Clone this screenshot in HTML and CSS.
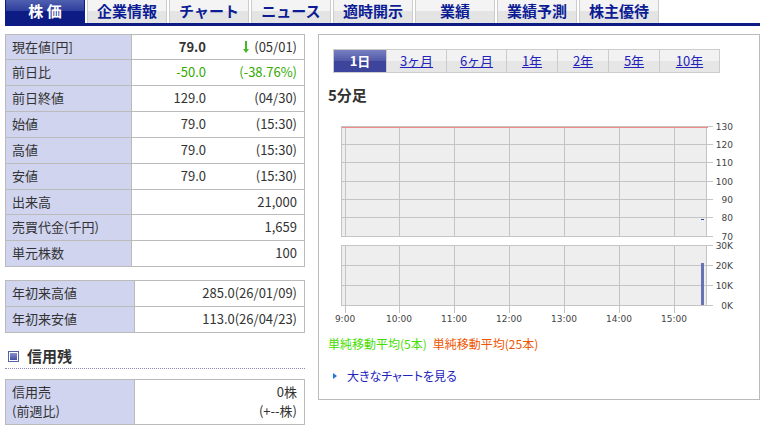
FILE: index.html
```html
<!DOCTYPE html>
<html lang="ja">
<head>
  <meta charset="UTF-8" />
  <meta name="viewport" content="width=device-width, initial-scale=1" />
  <title>株価</title>
  <link rel="stylesheet" href="styles.css">
</head>

<body>
  <!-- メインタブ -->
  <nav class="main-nav">
    <a href="#" class="active">株 価</a>
    <a href="#">企業情報</a>
    <a href="#">チャート</a>
    <a href="#">ニュース</a>
    <a href="#">適時開示</a>
    <a href="#">業績</a>
    <a href="#">業績予測</a>
    <a href="#">株主優待</a>
  </nav>

  <div class="contents">
    <!-- 株価情報 -->
    <div class="info">
      <table class="data price">
        <tr class="short"><th>現在値[円]</th><td><b>79.0</b></td><td class="time"><svg class="down" width="8" height="12" viewBox="0 0 8 12"><path d="M3 0h2v8h2L4 12 1 8h2z" /></svg>(05/01)</td></tr>
        <tr class="minus"><th>前日比</th><td>-50.0</td><td class="time">(-38.76%)</td></tr>
        <tr><th>前日終値</th><td>129.0</td><td class="time">(04/30)</td></tr>
        <tr><th>始値</th><td>79.0</td><td class="time">(15:30)</td></tr>
        <tr><th>高値</th><td>79.0</td><td class="time">(15:30)</td></tr>
        <tr><th>安値</th><td>79.0</td><td class="time">(15:30)</td></tr>
        <tr class="short"><th>出来高</th><td colspan="2">21,000</td></tr>
        <tr><th>売買代金(千円)</th><td colspan="2">1,659</td></tr>
        <tr><th>単元株数</th><td colspan="2">100</td></tr>
      </table>

      <table class="data year">
        <tr><th>年初来高値</th><td>285.0(26/01/09)</td></tr>
        <tr><th>年初来安値</th><td>113.0(26/04/23)</td></tr>
      </table>

      <h2><span class="mark"></span>信用残</h2>

      <table class="data margin-trade">
        <tr><th>信用売<br>(前週比)</th><td>0株<br>(+--株)</td></tr>
      </table>
    </div>

    <!-- チャート -->
    <div class="chart-box">
      <div class="term">
        <a href="#" class="active">1日</a>
        <a href="#" class="month">3ヶ月</a>
        <a href="#" class="month">6ヶ月</a>
        <a href="#">1年</a>
        <a href="#">2年</a>
        <a href="#">5年</a>
        <a href="#" class="month">10年</a>
      </div>

      <h3>5分足</h3>

      <svg class="chart" width="412" height="212" viewBox="0 0 412 212">
        <rect class="plot" x="13" y="10" width="366" height="111" />
        <rect class="plot" x="13" y="129" width="366" height="61" />
        <!-- 横線 -->
        <g class="line">
          <rect x="13" y="10" width="372" height="1" />
          <rect x="13" y="28" width="372" height="1" />
          <rect x="13" y="46" width="372" height="1" />
          <rect x="13" y="65" width="372" height="1" />
          <rect x="13" y="83" width="372" height="1" />
          <rect x="13" y="101" width="372" height="1" />
          <rect x="13" y="120" width="372" height="1" />
          <rect x="13" y="129" width="372" height="1" />
          <rect x="13" y="149" width="372" height="1" />
          <rect x="13" y="169" width="372" height="1" />
          <rect x="13" y="189" width="372" height="1" />
        </g>
        <!-- 縦線 -->
        <g class="line">
          <path d="M13 10h1v111h-1zM13 129h1v61h-1zM378 10h1v111h-1zM378 129h1v61h-1z" />
          <path d="M17 10h1v111h-1zM17 129h1v68h-1z" />
          <path d="M71 10h1v111h-1zM71 129h1v68h-1z" />
          <path d="M126 10h1v111h-1zM126 129h1v68h-1z" />
          <path d="M181 10h1v111h-1zM181 129h1v68h-1z" />
          <path d="M236 10h1v111h-1zM236 129h1v68h-1z" />
          <path d="M291 10h1v111h-1zM291 129h1v68h-1z" />
          <path d="M346 10h1v111h-1zM346 129h1v68h-1z" />
        </g>
        <rect class="base" x="14" y="11" width="366" height="1" />
        <rect class="candle" x="373" y="103" width="3" height="1" />
        <rect class="volume" x="373" y="147" width="3" height="42" />
        <g class="y-label">
          <text x="405" y="14">130</text>
          <text x="405" y="32">120</text>
          <text x="405" y="50">110</text>
          <text x="405" y="69">100</text>
          <text x="405" y="87">90</text>
          <text x="405" y="105">80</text>
          <text x="405" y="124">70</text>
          <text x="405" y="133">30K</text>
          <text x="405" y="153">20K</text>
          <text x="405" y="173">10K</text>
          <text x="405" y="193">0K</text>
        </g>
        <g class="x-label">
          <text x="17" y="206">9:00</text>
          <text x="71" y="206">10:00</text>
          <text x="126" y="206">11:00</text>
          <text x="181" y="206">12:00</text>
          <text x="236" y="206">13:00</text>
          <text x="291" y="206">14:00</text>
          <text x="346" y="206">15:00</text>
        </g>
      </svg>

      <p class="legend"><span class="ma5">単純移動平均(5本)</span><span class="ma25">単純移動平均(25本)</span></p>
      <p class="more"><a href="#">大きなチャートを見る</a></p>
    </div>
  </div>
</body>
</html>
```

FILE: styles.css
```css
body {
  margin: 0 6px 0 5px;
  background: #fff;
  color: #333;
  font-family: "Noto Sans CJK JP", sans-serif;
  font-size: 13px;
  line-height: 19px;
}

a {
  color: #2222bb;
}

/* メインタブ */
.main-nav {
  display: flex;
  gap: 2px;
  border-bottom: 3px solid #0c1c84;
}

.main-nav a {
  box-sizing: border-box;
  width: 80px;
  height: 23px;
  border: 1px solid #ccc;
  border-width: 0 1px;
  background: linear-gradient(#f4f4f4 50%, #e4e4e4 50%);
  color: #0c1c94;
  font-size: 15px;
  font-weight: bold;
  line-height: 22px;
  text-align: center;
  text-decoration: none;
  white-space: nowrap;
}

.main-nav a.active {
  border-color: #0c1c84;
  background: linear-gradient(#5060b0, #2c3c9c 50%, #0c1c84 50%);
  color: #fff;
}

.contents {
  display: flex;
  align-items: flex-start;
  gap: 13px;
  margin-top: 8px;
}

/* 左の表 */
.info {
  flex: none;
  width: 300px;
}

.data {
  width: 100%;
  border-collapse: collapse;
  border: 1px solid #bbb;
  margin-bottom: 13px;
}

.data th,
.data td {
  padding: 2px 7px 4px;
  border-top: 1px solid #bbb;
}

.data th {
  box-sizing: border-box;
  width: 129px;
  padding-left: 6px;
  border-right: 1px solid #bbb;
  background: #d0d4ef;
  font-weight: normal;
  text-align: left;
}

.data td {
  text-align: right;
}

.price th {
  width: 126px;
}

.price .time {
  padding-left: 0;
  width: 84px;
}

.data .short th,
.data .short td {
  padding-bottom: 3px;
}

.minus td {
  color: #33aa00;
}

.down {
  margin-right: 4px;
  vertical-align: -1px;
  fill: #44bb22;
}

.info h2 {
  display: flex;
  align-items: center;
  gap: 8px;
  margin: 0 0 10px;
  padding: 0 0 2px 3px;
  border-bottom: 1px dotted #8888bb;
  font-size: 15px;
  line-height: 20px;
}

.mark {
  width: 7px;
  height: 7px;
  padding: 1px;
  border: 1px solid #5560a8;
  background: linear-gradient(#8890c8, #4450a0) content-box;
}

/* チャート */
.chart-box {
  flex: 1;
  min-width: 0;
  border: 1px solid #bbb;
  padding: 14px 9px;
}

.term {
  display: flex;
  width: fit-content;
  margin-left: 5px;
  border: 1px solid #ccc;
  background: linear-gradient(#f2f2f2 50%, #e6e6e6 50%);
}

.term a {
  width: 50px;
  border-left: 1px solid #ccc;
  line-height: 22px;
  text-align: center;
}

.term a.month {
  width: 59px;
}

.term a.active {
  width: 52px;
  border-left: 0;
  background: linear-gradient(#7880c0, #5058a8 50%, #3c449c 50%);
  color: #fff;
  font-weight: bold;
  text-decoration: none;
}

.chart-box h3 {
  margin: 12px 0 11px;
  font-size: 15px;
  line-height: 20px;
}

.chart {
  display: block;
  max-width: 100%;
}

.plot {
  fill: #eee;
}

.line {
  fill: #c4c4c4;
}

.base {
  fill: #f08888;
}

.candle {
  fill: #3344aa;
}

.volume {
  fill: #6672b4;
}

.chart text {
  fill: #444;
  font-family: "DejaVu Sans", sans-serif;
  font-size: 9px;
}

.y-label {
  text-anchor: end;
}

.x-label {
  text-anchor: middle;
}

.legend {
  display: flex;
  gap: 6px;
  margin: 6px 0 13px;
  font-size: 12px;
}

.ma5 {
  color: #44dd00;
}

.ma25 {
  color: #ee5500;
}

.more {
  display: flex;
  align-items: center;
  gap: 10px;
  margin: 0 0 0 5px;
}

.more::before {
  content: "";
  border: 3px solid transparent;
  border-left: 4px solid #2277cc;
  border-right: 0;
}

.more a {
  font-size: 12px;
  font-feature-settings: "palt";
  text-decoration: none;
}
```
